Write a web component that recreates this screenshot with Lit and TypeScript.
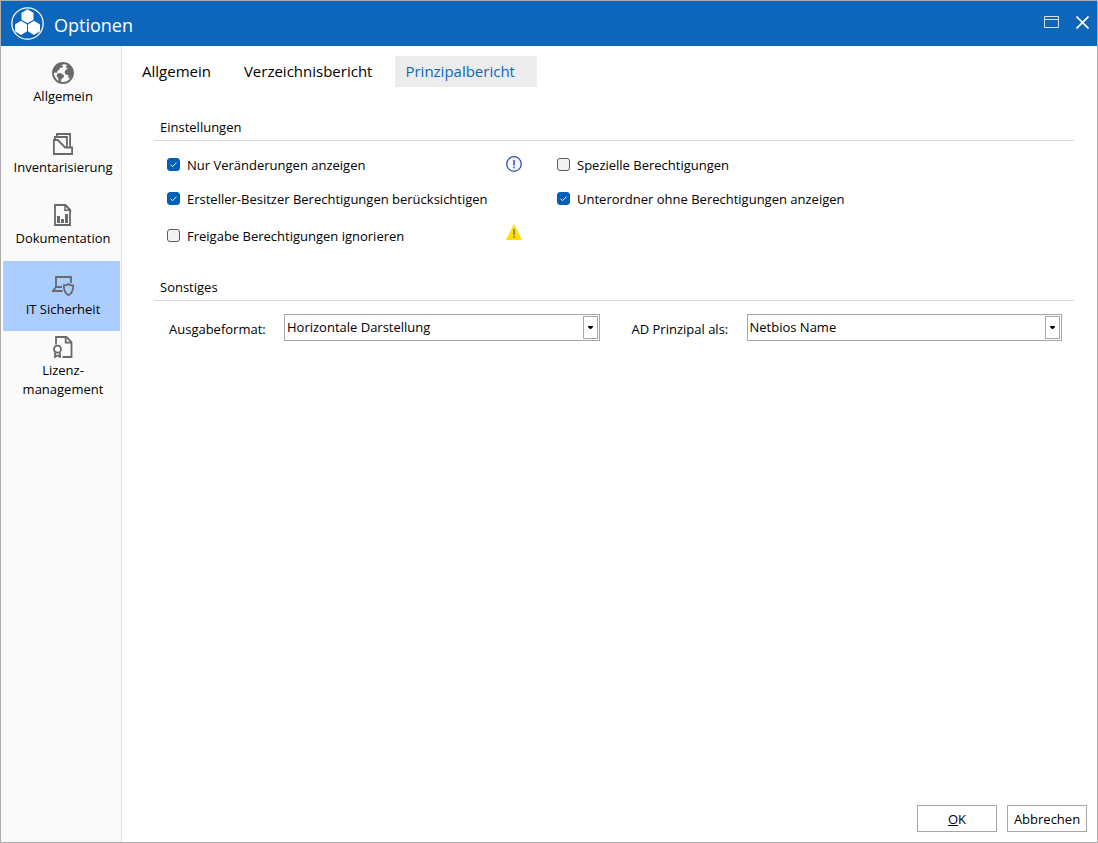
import { LitElement, html, css, svg, nothing, TemplateResult } from "lit";
import { customElement, state } from "lit/decorators.js";
import { classMap } from "lit/directives/class-map.js";

interface NavItem {
  id: string;
  lines: string[];
  icon: TemplateResult;
}

interface Option {
  id: string;
  label: string;
  checked: boolean;
  hint?: "info" | "warning";
}

const globeIcon = html`<svg class="icon" viewBox="0 0 22 22" aria-hidden="true">
  <circle cx="11" cy="11" r="10" fill="#fafafa" stroke="#696969" stroke-width="1.8" />
  <path fill="#696969" d="M1.500 8C3 3.500 6.500 1 10.500 1l1 1.500-2 .5 1.500 1.500-1 1.500-2-.5-.5 2-2 1.500-1 2L3 10.500 1.500 11z" />
  <path fill="#696969" d="M5.500 11.500l3-.6 3.500 2.300-.5 2.300-2 1.500-.8 3.300-2-1-.5-3.300-1.700-2.300z" />
  <path fill="#696969" d="M13.500 5l2-2 1.500.3C19.500 5.500 21 8 21 11l-.5 3-1.500.5-1 2.500-1.500-1-.2-3-2.800-.5-1-2.500 1.500-2.500 2-.5-1-1z" />
</svg>`;

const foldersIcon = html`<svg class="icon" viewBox="0 0 22 22" aria-hidden="true">
  <g fill="none" stroke="#696969" stroke-width="1.800">
    <path d="M1.900 21V7h3.800l7.500 7.500h6.900V21z" />
    <path d="M2.900 7V4h12v10.500" />
    <path d="M4.900 4V1h13.200v13.500" />
  </g>
</svg>`;

const reportIcon = html`<svg class="icon" viewBox="0 0 22 22" aria-hidden="true">
  <path d="M3 1h10.500L18 5.500V21H3z" fill="none" stroke="#696969" stroke-width="1.800" />
  <path d="M13 1v5.200h5z" fill="#fafafa" stroke="#696969" stroke-width="1.500" />
  <path d="M5 12h3v7H5zM9 15h3v4H9zM13 10h3v9h-3z" fill="#696969" />
</svg>`;

const securityIcon = html`<svg class="icon" viewBox="0 0 22 22" aria-hidden="true">
  <g fill="none" stroke="#696969" stroke-width="1.800">
    <path d="M4 12V2h15v6" />
    <path d="M10 12H4l-3 4h9.500" />
    <path d="M16.500 9c1.500 1.200 3 1.500 4.700 1.500 0 5-1.200 8-4.700 9.800-3.500-1.800-4.700-4.800-4.700-9.800 1.700 0 3.200-.3 4.700-1.500z" />
  </g>
</svg>`;

const licenseIcon = html`<svg class="icon" viewBox="0 0 22 22" aria-hidden="true">
  <g fill="none" stroke="#696969" stroke-width="1.800">
    <path d="M4 8.500V1h10.500l5 5v15h-9" />
    <path d="M13.700 1v5.700h5.800" />
    <circle cx="5.500" cy="13.200" r="3.500" />
    <path d="M3 16.500V21l2.500-1.700L8 21v-4.500" />
  </g>
</svg>`;

const logo = html`<svg class="logo" viewBox="0 0 32 32" aria-hidden="true">
  <circle cx="16" cy="16" r="15.200" fill="none" stroke="#fff" stroke-width="1.200" />
  <g fill="#fff" stroke="#fff" stroke-width="1" stroke-linejoin="round">
    ${[[16, 9], [9.700, 20.200], [22.300, 20.200]].map(
      ([x, y]) => svg`<path transform="translate(${x} ${y})" d="M0-6.200 5.300-3.100V3.100L0 6.200-5.300 3.100V-3.100z" />`
    )}
  </g>
</svg>`;

@customElement("app-root")
export class OptionsDialog extends LitElement {
  @state() private area = "security";
  @state() private tab = "Prinzipalbericht";

  private readonly nav: NavItem[] = [
    { id: "general", lines: ["Allgemein"], icon: globeIcon },
    { id: "inventory", lines: ["Inventarisierung"], icon: foldersIcon },
    { id: "docs", lines: ["Dokumentation"], icon: reportIcon },
    { id: "security", lines: ["IT Sicherheit"], icon: securityIcon },
    { id: "license", lines: ["Lizenz-", "management"], icon: licenseIcon },
  ];

  private readonly tabs = ["Allgemein", "Verzeichnisbericht", "Prinzipalbericht"];

  private readonly options: Option[] = [
    { id: "changes", label: "Nur Veränderungen anzeigen", checked: true, hint: "info" },
    { id: "special", label: "Spezielle Berechtigungen", checked: false },
    { id: "owner", label: "Ersteller-Besitzer Berechtigungen berücksichtigen", checked: true },
    { id: "subfolders", label: "Unterordner ohne Berechtigungen anzeigen", checked: true },
    { id: "shares", label: "Freigabe Berechtigungen ignorieren", checked: false, hint: "warning" },
  ];

  static styles = css`
    :host {
      display: block;
      font: 13px/19px "Segoe UI", "Open Sans", "Noto Sans", sans-serif;
      color: #000;
    }
    * { box-sizing: border-box; }
    button, select, input { font: inherit; color: inherit; margin: 0; }
    svg { display: block; flex: none; }

    .window {
      display: flex;
      flex-direction: column;
      min-height: 100vh;
      border: 1px solid #adadad;
      background: #fff;
    }
    .titlebar {
      display: flex;
      align-items: center;
      height: 45px;
      padding: 0 8px 0 10px;
      background: #0e66ba;
      color: #fff;
    }
    .logo { width: 33px; height: 33px; }
    .title { flex: 1; margin: 2px 0 0 10px; font-size: 18px; line-height: 24px; font-weight: 400; }
    .caption { display: flex; gap: 17px; padding-bottom: 2px; }
    .caption button { padding: 0; border: 0; background: none; }

    .body { flex: 1; display: flex; }
    .sidebar {
      flex: none;
      width: 121px;
      display: flex;
      flex-direction: column;
      gap: 1px;
      padding: 2px 1px 0 2px;
      border-right: 1px solid #e1e1e1;
      background: #fafafa;
    }
    .nav {
      display: flex;
      flex-direction: column;
      align-items: center;
      justify-content: center;
      height: 70px;
      gap: 3px;
      padding: 1px 0 0 3px;
      border: 0;
      background: none;
    }
    .nav.active { background: #abcdff; }
    .nav .icon { width: 22px; height: 22px; }
    .nav .line { display: block; }

    .content { flex: 1; min-width: 0; display: flex; flex-direction: column; padding: 10px; }
    .tabs { display: flex; gap: 1px; }
    .tab {
      height: 31px;
      padding: 0 22px 2px 10px;
      border: 0;
      background: none;
      font-size: 15px;
      line-height: 20px;
    }
    .tab.active { background: #ececec; color: #0e66ba; }

    .panel { flex: 1; padding: 31px 13px 0 22px; }
    .heading {
      margin: 0;
      padding: 0 6px 3px;
      border-bottom: 1px solid #d9d9d9;
      font-size: 13px;
      font-weight: 400;
    }
    .options {
      display: grid;
      grid-template-columns: 43% 1fr;
      grid-template-rows: 34px 34px 40px;
      padding: 7px 0 22px 13px;
    }
    .option { display: flex; align-items: center; justify-content: space-between; padding-right: 35px; }
    .option label { display: flex; align-items: center; gap: 7px; white-space: nowrap; }
    .check { display: grid; width: 13px; height: 13px; margin-bottom: 2px; }
    .check > * { grid-area: 1 / 1; }
    .check input {
      appearance: none;
      width: 13px;
      height: 13px;
      border: 1px solid #5c5c5c;
      border-radius: 3px;
      background: #f3f3f3;
    }
    .check input:checked { border-color: #005fb8; background: #005fb8; }
    .check svg { pointer-events: none; visibility: hidden; }
    .check input:checked + svg { visibility: visible; }
    .info { margin-bottom: 2px; }
    .warning { margin-bottom: 8px; }

    .fields {
      display: grid;
      grid-template-columns: 1fr 1fr;
      column-gap: 32px;
      padding: 13px 12px 0 15px;
    }
    .field { display: flex; align-items: center; }
    .field label { flex: none; width: 115px; padding-top: 3px; }
    .combo { flex: 1; display: grid; height: 27px; }
    .combo > * { grid-area: 1 / 1; }
    .combo select {
      appearance: none;
      width: 100%;
      padding: 0 20px 1px 2px;
      border: 1px solid #a6a6a6;
      border-radius: 0;
      background: #fff;
    }
    .arrow {
      justify-self: end;
      display: grid;
      place-items: center;
      width: 15px;
      margin: 2px;
      border: 1px solid #a6a6a6;
      pointer-events: none;
    }

    .actions { display: flex; justify-content: flex-end; gap: 10px; }
    .actions button {
      width: 80px;
      height: 27px;
      padding: 2px 0 0;
      border: 1px solid #a6a6a6;
      background: #fff;
    }
    .key { text-decoration: underline; }
  `;

  private hint(kind?: "info" | "warning") {
    if (kind === "info") {
      return html`<svg class="info" width="16" height="16" viewBox="0 0 16 16" role="img" aria-label="Hinweis">
        <circle cx="8" cy="8" r="7.300" fill="#f5f7fb" stroke="#2f55a4" stroke-width="1.300" />
        <path d="M8 4v5.500M8 10.700v1.500" stroke="#2f55a4" stroke-width="1.500" />
      </svg>`;
    }
    if (kind === "warning") {
      return html`<svg class="warning" width="16" height="16" viewBox="0 0 16 16" role="img" aria-label="Warnung">
        <path d="M8 0l8 16H0z" fill="#ffde00" />
        <path d="M8 5v6M8 12v1.800" stroke="#6c6c6c" stroke-width="1.500" />
      </svg>`;
    }
    return nothing;
  }

  private combo(id: string, label: string, values: string[]) {
    return html`<div class="field">
      <label for=${id}>${label}</label>
      <div class="combo">
        <select id=${id}>${values.map((v) => html`<option>${v}</option>`)}</select>
        <span class="arrow" aria-hidden="true">
          <svg width="5" height="3" viewBox="0 0 5 3"><path d="M0 0h5v1L3 3H2L0 1z" /></svg>
        </span>
      </div>
    </div>`;
  }

  render() {
    return html`<div class="window">
      <header class="titlebar">
        ${logo}
        <h1 class="title">Optionen</h1>
        <div class="caption">
          <button aria-label="Maximieren">
            <svg width="15" height="13" viewBox="0 0 15 13">
              <path d="M.5.5h14v11H.5zM.5 3.500h14" fill="none" stroke="#d3e3f3" />
            </svg>
          </button>
          <button aria-label="Schließen">
            <svg width="13" height="13" viewBox="0 0 13 13">
              <path d="M.5.5l12 12M12.500.5l-12 12" stroke="#fff" stroke-width="1.600" />
            </svg>
          </button>
        </div>
      </header>
      <div class="body">
        <nav class="sidebar">
          ${this.nav.map(
            (n) => html`<button
              class=${classMap({ nav: true, active: n.id === this.area })}
              @click=${() => (this.area = n.id)}
            >
              ${n.icon}
              <span>${n.lines.map((l) => html`<span class="line">${l}</span>`)}</span>
            </button>`
          )}
        </nav>
        <main class="content">
          <div class="tabs" role="tablist">
            ${this.tabs.map(
              (t) => html`<button
                role="tab"
                aria-selected=${t === this.tab}
                class=${classMap({ tab: true, active: t === this.tab })}
                @click=${() => (this.tab = t)}
              >${t}</button>`
            )}
          </div>
          <div class="panel">
            <h2 class="heading">Einstellungen</h2>
            <div class="options">
              ${this.options.map(
                (o) => html`<div class="option">
                  <label for=${o.id}>
                    <span class="check">
                      <input type="checkbox" id=${o.id} .checked=${o.checked} />
                      <svg width="13" height="13" viewBox="0 0 13 13">
                        <path d="M3.500 6.700l2 2 4-4" fill="none" stroke="#fff" stroke-width="1" />
                      </svg>
                    </span>
                    ${o.label}
                  </label>
                  ${this.hint(o.hint)}
                </div>`
              )}
            </div>
            <h2 class="heading">Sonstiges</h2>
            <div class="fields">
              ${this.combo("format", "Ausgabeformat:", ["Horizontale Darstellung", "Vertikale Darstellung"])}
              ${this.combo("principal", "AD Prinzipal als:", ["Netbios Name", "Anzeigename"])}
            </div>
          </div>
          <footer class="actions">
            <button><span class="key">O</span>K</button>
            <button>Abbrechen</button>
          </footer>
        </main>
      </div>
    </div>`;
  }
}
